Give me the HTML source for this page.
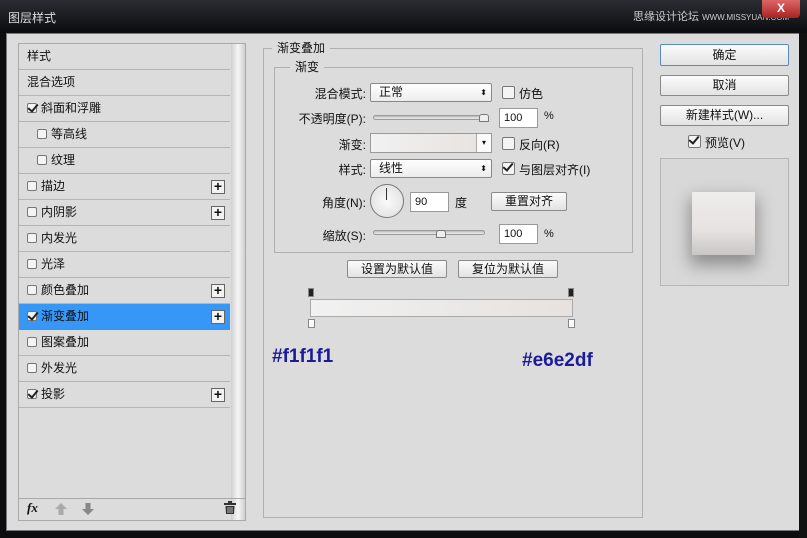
<!DOCTYPE html>
<html><head><meta charset="utf-8"><style>
*{box-sizing:border-box;margin:0;padding:0}
body{width:807px;height:538px;background:#0d0d0f;font-family:"Liberation Sans","Noto Sans CJK SC",sans-serif;font-size:12px;color:#111;position:relative;overflow:hidden}
.a{position:absolute}
.title{left:0;top:0;width:807px;height:33px;background:linear-gradient(#2a2d33,#0b0c0e)}
.main{left:6px;top:33px;width:794px;height:498px;background:#dcdcdc;border:1px solid #777}
.lp{left:18px;top:43px;width:228px;height:478px;border:1px solid #a9a9a9;background:#dcdcdc}
.row{position:absolute;left:19px;width:211px;height:26px;border-bottom:1px solid #b5b5b5;line-height:25px;font-size:12px}
.cb{display:inline-block;width:10px;height:10px;border:1px solid #777;background:#f4f4f4;border-radius:2px;vertical-align:-1px;margin-right:4px;position:relative}
.ck:after{content:"";position:absolute;left:2px;top:-2px;width:4px;height:8px;border:solid #222;border-width:0 2px 2px 0;transform:rotate(40deg)}
.plus{position:absolute;right:5px;top:6px;width:14px;height:14px;border:1px solid #666;background:#f2f2f2;font-weight:bold;font-size:14px;line-height:11px;text-align:center}
.sb{left:231px;top:44px;width:14px;height:476px;background:linear-gradient(90deg,#d0d0d0,#f6f6f6 50%,#cfcfcf)}
.btn{position:absolute;border:1px solid #8a8a8a;border-radius:2px;background:linear-gradient(#fbfbfb,#e3e3e3);text-align:center;font-size:12px}
.fs{border:1px solid #b0b0b0}
.lg{background:#dcdcdc;padding:0 5px;font-size:12px}
.sel{background:linear-gradient(#fff,#ececec);border:1px solid #888;border-radius:2px}
.inp{background:#fff;border:1px solid #999;padding-left:4px;font-size:11px;line-height:18px}
.lbl{text-align:right;font-size:12px}
.track{height:5px;border:1px solid #999;border-radius:3px;background:linear-gradient(#bbb,#eee)}
</style></head><body>
<div class="a title"></div>
<div class="a" style="left:8px;top:9px;color:#ddd;font-size:12px">图层样式</div>
<div class="a" style="left:633px;top:8px;color:#ccc;font-size:11px">思缘设计论坛 <span style="font-size:8px">WWW.MISSYUAN.COM</span></div>
<div class="a" style="left:762px;top:0;width:38px;height:18px;background:linear-gradient(#d66,#a22);border-radius:0 0 4px 4px;color:#fff;text-align:center;font-weight:bold;font-size:12px;line-height:16px">X</div>
<div class="a main"></div>
<div class="a lp"></div>
<div class="a sb"></div>
<div class="row" style="top:44px;padding-left:8px">样式</div>
<div class="row" style="top:70px;padding-left:8px">混合选项</div>
<div class="row" style="top:96px;padding-left:8px"><span class="cb ck"></span>斜面和浮雕</div>
<div class="row" style="top:122px;padding-left:18px"><span class="cb"></span>等高线</div>
<div class="row" style="top:148px;padding-left:18px"><span class="cb"></span>纹理</div>
<div class="row" style="top:174px;padding-left:8px"><span class="cb"></span>描边<span class="plus">+</span></div>
<div class="row" style="top:200px;padding-left:8px"><span class="cb"></span>内阴影<span class="plus">+</span></div>
<div class="row" style="top:226px;padding-left:8px"><span class="cb"></span>内发光</div>
<div class="row" style="top:252px;padding-left:8px"><span class="cb"></span>光泽</div>
<div class="row" style="top:278px;padding-left:8px"><span class="cb"></span>颜色叠加<span class="plus">+</span></div>
<div class="row" style="top:304px;padding-left:8px;background:#3797f7;border-bottom-color:#3797f7"><span class="cb ck"></span>渐变叠加<span class="plus">+</span></div>
<div class="row" style="top:330px;padding-left:8px"><span class="cb"></span>图案叠加</div>
<div class="row" style="top:356px;padding-left:8px"><span class="cb"></span>外发光</div>
<div class="row" style="top:382px;padding-left:8px"><span class="cb ck"></span>投影<span class="plus">+</span></div>
<div class="a" style="left:19px;top:498px;width:226px;border-top:1px solid #a9a9a9"></div>
<div class="a" style="left:27px;top:500px;font-style:italic;font-weight:bold;font-size:13px;font-family:'Liberation Serif',serif">fx</div>
<svg class="a" style="left:54px;top:502px" width="14" height="14"><path d="M7 1 L13 7 H9.5 V13 H4.5 V7 H1Z" fill="#aaa"/></svg>
<svg class="a" style="left:81px;top:502px" width="14" height="14"><path d="M7 13 L13 7 H9.5 V1 H4.5 V7 H1Z" fill="#888"/></svg>
<svg class="a" style="left:224px;top:501px" width="13" height="14"><rect x="0" y="2" width="12" height="2" fill="#333"/><rect x="4" y="0" width="4" height="2" fill="#333"/><path d="M1.5 5 H10.5 L10 13 H2Z" fill="#333"/><path d="M4 6 V12 M6 6 V12 M8 6 V12" stroke="#ddd" stroke-width="0.8"/></svg>

<div class="a fs" style="left:263px;top:48px;width:380px;height:470px"></div>
<div class="a lg" style="left:272px;top:39px">渐变叠加</div>
<div class="a fs" style="left:274px;top:67px;width:359px;height:186px"></div>
<div class="a lg" style="left:290px;top:58px">渐变</div>

<div class="a lbl" style="left:290px;top:85px;width:76px">混合模式:</div>
<div class="a sel" style="left:370px;top:83px;width:122px;height:19px;padding-left:8px;line-height:17px">正常<span style="position:absolute;right:4px;font-size:8px">⬍</span></div>
<div class="a" style="left:502px;top:85px"><span class="cb" style="width:13px;height:13px"></span>仿色</div>
<div class="a lbl" style="left:290px;top:110px;width:76px">不透明度(P):</div>
<div class="a track" style="left:373px;top:115px;width:112px"></div>
<div class="a" style="left:479px;top:114px;width:10px;height:8px;background:#eee;border:1px solid #777;border-radius:3px 3px 0 0"></div>
<div class="a inp" style="left:499px;top:108px;width:39px;height:20px">100</div>
<div class="a" style="left:544px;top:110px;font-size:11px">%</div>
<div class="a lbl" style="left:290px;top:136px;width:76px">渐变:</div>
<div class="a" style="left:370px;top:133px;width:122px;height:20px;border:1px solid #999;background:linear-gradient(90deg,#f1f1f1,#e6e2df)"></div>
<div class="a" style="left:476px;top:134px;width:15px;height:18px;background:#fafafa;border-left:1px solid #aaa;font-size:8px;text-align:center;line-height:18px">▾</div>
<div class="a" style="left:502px;top:136px"><span class="cb" style="width:13px;height:13px"></span>反向(R)</div>
<div class="a lbl" style="left:290px;top:161px;width:76px">样式:</div>
<div class="a sel" style="left:370px;top:159px;width:122px;height:19px;padding-left:8px;line-height:17px">线性<span style="position:absolute;right:4px;font-size:8px">⬍</span></div>
<div class="a" style="left:502px;top:161px"><span class="cb ck" style="width:13px;height:13px"></span>与图层对齐(I)</div>
<div class="a lbl" style="left:290px;top:194px;width:76px">角度(N):</div>
<div class="a" style="left:370px;top:184px;width:34px;height:34px;border:1px solid #777;border-radius:50%;background:radial-gradient(#fafafa,#ddd)"></div>
<div class="a" style="left:386px;top:188px;width:1px;height:12px;background:#333"></div>
<div class="a inp" style="left:410px;top:192px;width:39px;height:20px">90</div>
<div class="a" style="left:455px;top:194px">度</div>
<div class="btn" style="left:491px;top:192px;width:76px;height:19px;line-height:17px">重置对齐</div>
<div class="a lbl" style="left:290px;top:227px;width:76px">缩放(S):</div>
<div class="a track" style="left:373px;top:230px;width:112px"></div>
<div class="a" style="left:436px;top:230px;width:10px;height:8px;background:#eee;border:1px solid #777;border-radius:3px 3px 0 0"></div>
<div class="a inp" style="left:499px;top:224px;width:39px;height:20px">100</div>
<div class="a" style="left:544px;top:228px;font-size:11px">%</div>

<div class="btn" style="left:347px;top:260px;width:100px;height:18px;line-height:16px">设置为默认值</div>
<div class="btn" style="left:458px;top:260px;width:100px;height:18px;line-height:16px">复位为默认值</div>
<div class="a" style="left:308px;top:288px;width:6px;height:9px;background:#222;border:1px solid #888"></div>
<div class="a" style="left:568px;top:288px;width:6px;height:9px;background:#222;border:1px solid #888"></div>
<div class="a" style="left:310px;top:299px;width:263px;height:18px;border:1px solid #aaa;background:linear-gradient(90deg,#f1f1f1,#e6e2df)"></div>
<div class="a" style="left:308px;top:319px;width:7px;height:9px;background:#fff;border:1px solid #888"></div>
<div class="a" style="left:568px;top:319px;width:7px;height:9px;background:#fff;border:1px solid #888"></div>
<div class="a" style="left:272px;top:346px;color:#1b1b9a;font-size:19px;font-weight:bold">#f1f1f1</div>
<div class="a" style="left:522px;top:350px;color:#1b1b9a;font-size:19px;font-weight:bold">#e6e2df</div>

<div class="btn" style="left:660px;top:44px;width:129px;height:22px;line-height:20px;border-color:#5a8ac2">确定</div>
<div class="btn" style="left:660px;top:75px;width:129px;height:21px;line-height:19px">取消</div>
<div class="btn" style="left:660px;top:105px;width:129px;height:21px;line-height:19px">新建样式(W)...</div>
<div class="a" style="left:688px;top:134px"><span class="cb ck" style="width:13px;height:13px"></span>预览(V)</div>
<div class="a" style="left:660px;top:158px;width:129px;height:128px;border:1px solid #b5b5b5;background:#d8d8d8"></div>
<div class="a" style="left:692px;top:192px;width:63px;height:63px;background:linear-gradient(#eeecec,#e6e3e1 60%,#c9c7c6);box-shadow:0 8px 16px 2px rgba(0,0,0,.35)"></div>
<div class="a" style="left:799px;top:33px;width:8px;height:505px;background:#111"></div>
</body></html>
